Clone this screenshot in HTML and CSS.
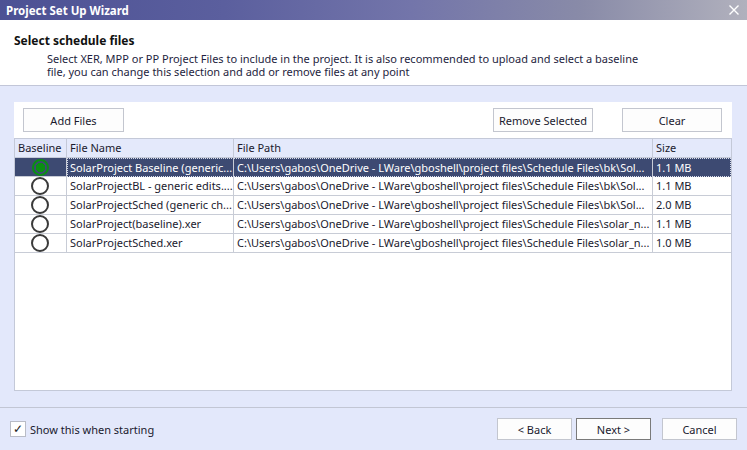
FILE: index.html
```html
<!DOCTYPE html>
<html>
<head>
<meta charset="utf-8">
<link rel="stylesheet" href="styles.css">
</head>
<body>
<div class="window">
  <div class="titlebar">
    <span class="title">Project Set Up Wizard</span>
    <svg class="close" width="10" height="10" viewBox="0 0 10 10"><path d="M0.5 0.5 L9.5 9.5 M9.5 0.5 L0.5 9.5" stroke="#fff" stroke-width="1.4" fill="none"/></svg>
  </div>
  <div class="header">
    <div class="h-title">Select schedule files</div>
    <div class="h-desc">Select XER, MPP or PP Project Files to include in the project. It is also recommended to upload and select a baseline<br>file, you can change this selection and add or remove files at any point</div>
  </div>
  <div class="body">
    <div class="panel">
      <div class="toolbar">
        <button class="btn add">Add Files</button>
        <div class="spacer"></div>
        <button class="btn remove">Remove Selected</button>
        <button class="btn clear">Clear</button>
      </div>
      <div class="grid">
        <div class="row head">
          <div class="cell">Baseline</div>
          <div class="cell">File Name</div>
          <div class="cell">File Path</div>
          <div class="cell">Size</div>
        </div>
        <div class="row sel">
          <div class="cell radio"><span class="rb on"></span></div>
          <div class="cell">SolarProject Baseline (generic...</div>
          <div class="cell">C:\Users\gabos\OneDrive - LWare\gboshell\project files\Schedule Files\bk\Sol...</div>
          <div class="cell">1.1 MB</div>
        </div>
        <div class="row">
          <div class="cell radio"><span class="rb"></span></div>
          <div class="cell">SolarProjectBL - generic edits....</div>
          <div class="cell">C:\Users\gabos\OneDrive - LWare\gboshell\project files\Schedule Files\bk\Sol...</div>
          <div class="cell">1.1 MB</div>
        </div>
        <div class="row">
          <div class="cell radio"><span class="rb"></span></div>
          <div class="cell">SolarProjectSched (generic ch...</div>
          <div class="cell">C:\Users\gabos\OneDrive - LWare\gboshell\project files\Schedule Files\bk\Sol...</div>
          <div class="cell">2.0 MB</div>
        </div>
        <div class="row">
          <div class="cell radio"><span class="rb"></span></div>
          <div class="cell">SolarProject(baseline).xer</div>
          <div class="cell">C:\Users\gabos\OneDrive - LWare\gboshell\project files\Schedule Files\solar_n...</div>
          <div class="cell">1.1 MB</div>
        </div>
        <div class="row">
          <div class="cell radio"><span class="rb"></span></div>
          <div class="cell">SolarProjectSched.xer</div>
          <div class="cell">C:\Users\gabos\OneDrive - LWare\gboshell\project files\Schedule Files\solar_n...</div>
          <div class="cell">1.0 MB</div>
        </div>
      </div>
    </div>
  </div>
  <div class="footer">
    <label class="check"><span class="box">&#10003;</span>Show this when starting</label>
    <div class="spacer"></div>
    <button class="btn nav">&lt; Back</button>
    <button class="btn nav next">Next &gt;</button>
    <button class="btn nav cancel">Cancel</button>
  </div>
</div>
</body>
</html>
```
FILE: styles.css
```css
* { box-sizing: border-box; }
html, body { margin: 0; padding: 0; }
body {
  width: 747px;
  height: 450px;
  overflow: hidden;
  font-family: "Noto Sans", "Liberation Sans", sans-serif;
  font-size: 11px;
  color: #1a1a2e;
}
.window {
  width: 747px;
  height: 450px;
  display: flex;
  flex-direction: column;
  background: #e3e8fb;
}
.titlebar {
  height: 20px;
  flex: none;
  display: flex;
  align-items: center;
  justify-content: space-between;
  padding: 0 8px 0 6px;
  background: linear-gradient(90deg, #4c5194 0%, #5b5f9e 30%, #7375aa 55%, #898ba8 78%, #b1b1bd 100%);
}
.title {
  color: #fff;
  font-weight: bold;
  font-size: 11.5px;
}
.close { display: block; }
.header {
  height: 66px;
  flex: none;
  background: #fff;
  border-bottom: 1px solid #c2c6d8;
  padding: 13px 0 0 14px;
}
.h-title {
  font-weight: bold;
  font-size: 12px;
  line-height: 16px;
  color: #111;
}
.h-desc {
  margin: 3px 0 0 33px;
  line-height: 13px;
  color: #1e1e40;
}
.body {
  flex: 1;
  padding: 16px 15px 16px 14px;
  display: flex;
  flex-direction: column;
}
.panel {
  flex: 1;
  background: #fff;
  display: flex;
  flex-direction: column;
}
.toolbar {
  display: flex;
  padding: 6px 10px 0 9px;
  height: 36px;
  align-items: flex-start;
}
.spacer { flex: 1; }
.btn {
  font-family: inherit;
  font-size: 11px;
  color: #1a1a2e;
  background: #fdfdfd;
  border: 1px solid #c3c6cf;
  height: 24px;
  padding: 0;
  margin: 0;
}
.add { width: 101px; }
.remove { width: 100px; margin-right: 29px; }
.clear { width: 100px; }
.grid {
  flex: 1;
  border-left: 1px solid #c4c9d8;
  border-right: 1px solid #c4c9d8;
  border-bottom: 1px solid #c4c9d8;
}
.row {
  display: grid;
  grid-template-columns: 52px 167px 419px 1fr;
  height: 19px;
}
.cell {
  border-right: 1px solid #c8ccd6;
  border-bottom: 1px solid #c8ccd6;
  padding-left: 3px;
  line-height: 18px;
  white-space: nowrap;
  overflow: hidden;
}
.cell:last-child { border-right: none; }
.head {
  background: #e4e9fb;
  border-top: 1px solid #c4c9d8;
  height: 20px;
}
.head .cell { border-color: #c4c9d8; }
.sel { background: #3d4a72; color: #fff; }
.sel .cell:not(.radio) {
  border-top: 1px dotted #d8dcea;
  border-bottom: 1px dotted #d8dcea;
  line-height: 17px;
}
.sel .cell:nth-child(2) { border-left: 1px dotted #d8dcea; padding-left: 2px; }
.sel .cell:last-child { border-right: 1px dotted #d8dcea; }
.radio {
  display: flex;
  align-items: center;
  justify-content: center;
  padding-left: 0;
  padding-right: 1px;
  overflow: visible;
}
.rb {
  width: 18px;
  height: 18px;
  border-radius: 50%;
  border: 2px solid #3a3a3a;
  background: #fff;
  flex: none;
}
.rb.on {
  width: 17px;
  height: 17px;
  border: 2px solid #0a8f12;
  background: radial-gradient(circle, #0a8f12 0 4.5px, #3d4a72 5px);
}
.footer {
  height: 43px;
  flex: none;
  border-top: 1px solid #c2c6d4;
  display: flex;
  align-items: center;
  padding: 0 10px 0 10px;
}
.check {
  display: flex;
  align-items: center;
  font-size: 11px;
  color: #1a1a2e;
}
.box {
  width: 16px;
  height: 16px;
  border: 1px solid #b9bcc6;
  background: #fff;
  margin-right: 4px;
  font-size: 12px;
  line-height: 14px;
  text-align: center;
  color: #222;
}
.nav { width: 75px; height: 22px; }
.next { margin-left: 4px; border-color: #7a7a7a; }
.cancel { margin-left: 11px; }
```
